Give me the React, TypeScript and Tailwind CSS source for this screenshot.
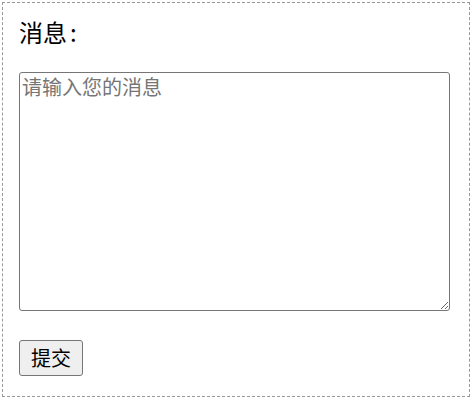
import React from 'react';

const cjk = { fontFamily: '"Noto Sans CJK SC", "Noto Sans", sans-serif' };

export default function App() {
  return (
    <div className="p-[2px] bg-white" style={cjk}>
      <form
        className="box-border w-[468px] h-[395px] border border-dashed border-[#999999] pl-4 pt-[14px]"
        onSubmit={(e) => e.preventDefault()}
      >
        <label htmlFor="msg" className="block text-[24px] leading-[30px] text-black">
          消息<span className="ml-[3px]">:</span>
        </label>
        <textarea
          id="msg"
          placeholder="请输入您的消息"
          className="block mt-[25px] box-border w-[431px] h-[239px] border border-[#767676] rounded-[3px] p-[2px] text-[20px] leading-[24px] text-black placeholder:text-[#757575] bg-white"
        />
        <button
          type="submit"
          className="block mt-[29px] box-border w-[64px] h-[36px] border border-[#767676] rounded-[3px] bg-[#efefef] text-[20px] leading-[24px] text-black"
        >
          提交
        </button>
      </form>
    </div>
  );
}
